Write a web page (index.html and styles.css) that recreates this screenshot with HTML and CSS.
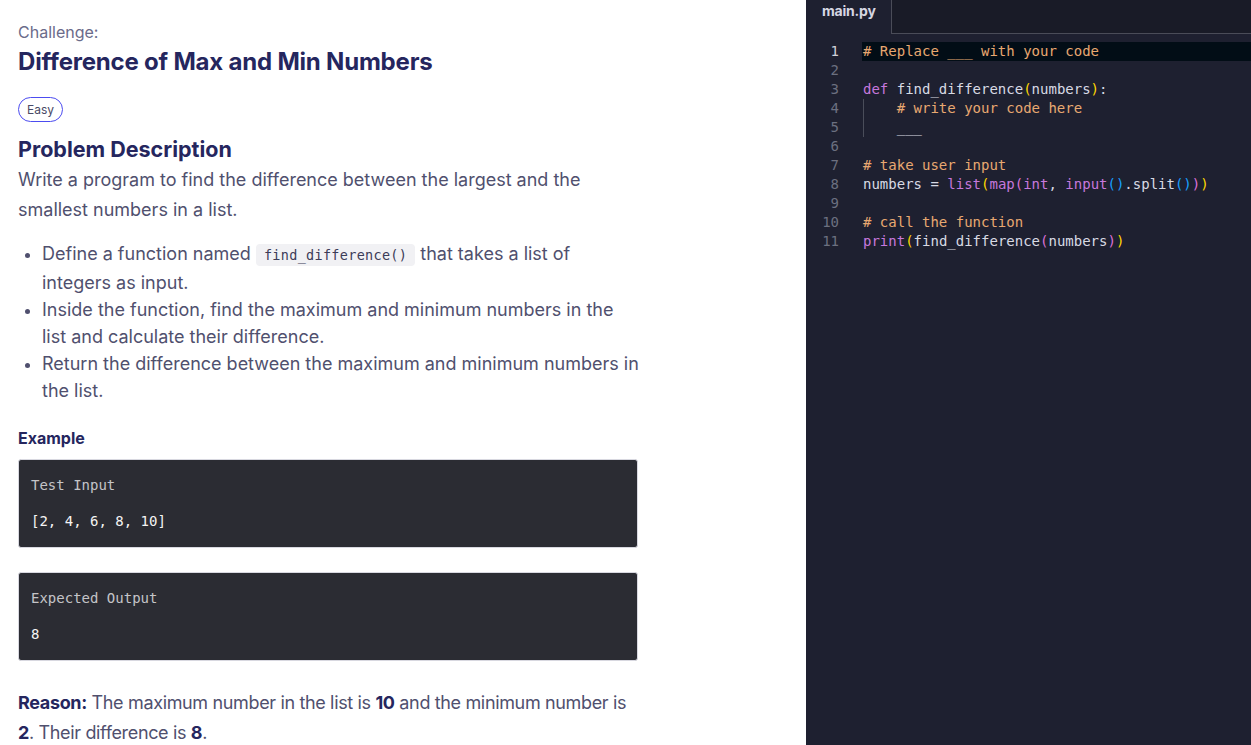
FILE: index.html
```html
<!DOCTYPE html>
<html>
<head>
<meta charset="utf-8">
<link rel="stylesheet" href="styles.css">
</head>
<body>
<div class="page">
  <main class="problem">
    <div class="content">
      <p class="eyebrow">Challenge:</p>
      <h1 class="title">Difference of Max and Min Numbers</h1>
      <span class="badge">Easy</span>
      <h2 class="section-title">Problem Description</h2>
      <p class="lead">Write a program to find the difference between the largest and the smallest numbers in a list.</p>
      <ul class="points">
        <li>Define a function named <code class="inline-code">find_difference()</code> that takes a list of integers as input.</li>
        <li>Inside the function, find the maximum and minimum numbers in the list and calculate their difference.</li>
        <li>Return the difference between the maximum and minimum numbers in the list.</li>
      </ul>
      <h3 class="example-title">Example</h3>
      <div class="io-box">
        <div class="io-label">Test Input</div>
        <div class="io-value">[2, 4, 6, 8, 10]</div>
      </div>
      <div class="io-box">
        <div class="io-label">Expected Output</div>
        <div class="io-value">8</div>
      </div>
      <p class="reason"><strong>Reason:</strong> The maximum number in the list is <strong>10</strong> and the minimum number is <strong>2</strong>. Their difference is <strong>8</strong>.</p>
    </div>
  </main>
  <section class="editor">
    <div class="tabs">
      <div class="tab">main.py</div>
      <div class="tab-fill"></div>
    </div>
    <div class="code">
      <div class="line current"><span class="ln">1</span><span class="src"><span class="c"># Replace ___ with your code</span></span></div>
      <div class="line"><span class="ln">2</span><span class="src"></span></div>
      <div class="line"><span class="ln">3</span><span class="src"><span class="k">def</span> find_difference<span class="b1">(</span>numbers<span class="b1">)</span>:</span></div>
      <div class="line"><span class="ln">4</span><span class="src guide"><span class="c">    # write your code here</span></span></div>
      <div class="line"><span class="ln">5</span><span class="src guide">    ___</span></div>
      <div class="line"><span class="ln">6</span><span class="src"></span></div>
      <div class="line"><span class="ln">7</span><span class="src"><span class="c"># take user input</span></span></div>
      <div class="line"><span class="ln">8</span><span class="src">numbers = <span class="k">list</span><span class="b1">(</span><span class="k">map</span><span class="b2">(</span><span class="k">int</span>, <span class="k">input</span><span class="b3">()</span>.split<span class="b3">()</span><span class="b2">)</span><span class="b1">)</span></span></div>
      <div class="line"><span class="ln">9</span><span class="src"></span></div>
      <div class="line"><span class="ln">10</span><span class="src"><span class="c"># call the function</span></span></div>
      <div class="line"><span class="ln">11</span><span class="src"><span class="k">print</span><span class="b1">(</span>find_difference<span class="b2">(</span>numbers<span class="b2">)</span><span class="b1">)</span></span></div>
    </div>
  </section>
</div>
</body>
</html>
```

FILE: styles.css
```css
* { box-sizing: border-box; }
html, body { margin: 0; padding: 0; height: 100%; }
body { background: #fff; font-family: Inter, "Noto Sans", sans-serif; overflow: hidden; }

.page { display: flex; height: 745px; }

.problem { width: 806px; flex: none; padding: 22px 0 0 18px; }
.content { width: 622px; }

.eyebrow { margin: 0; font-size: 16px; line-height: 20px; color: #6b6b8a; }
.title { margin: 5px 0 0; font-size: 24px; line-height: 30px; font-weight: 700; color: #25265e; letter-spacing: -0.2px; }
.badge {
  display: block; width: fit-content; margin-top: 20px;
  height: 25px; line-height: 23px; padding: 0 8px;
  border: 1px solid #4c4cf0; border-radius: 13px;
  font-size: 12px; color: #4a4a66;
}
.section-title { margin: 14px 0 0; font-size: 21.5px; line-height: 26px; font-weight: 700; color: #25265e; }
.lead { margin: 3px 0 0; font-size: 18px; line-height: 30px; color: #50506e; font-weight: 400; }

.points { margin: 15px 0 0; padding-left: 24px; list-style: none; font-size: 18px; line-height: 27px; color: #50506e; }
.points li::before {
  content: ""; display: inline-block; width: 5px; height: 5px; border-radius: 50%;
  background: #50506e; margin-left: -17px; margin-right: 12px; vertical-align: middle;
}
.inline-code {
  font-family: "DejaVu Sans Mono", monospace; font-size: 13.5px; letter-spacing: 0.3px;
  background: #f1f1f4; border-radius: 4px; padding: 3px 8px; color: #3c3c58;
}

.example-title { margin: 23px 0 0; font-size: 16px; line-height: 22px; font-weight: 700; color: #25265e; }

.io-box {
  margin-top: 10px; height: 89px; width: 620px; background: #2b2c33; border-radius: 3px;
  border: 1px solid #d8d8e0;
  padding: 16px 12px 0;
  font-family: "DejaVu Sans Mono", monospace; font-size: 14px; line-height: 18px;
}
.io-box + .io-box { margin-top: 24px; }
.io-label { color: #c4c4c8; }
.io-value { margin-top: 18px; color: #f4f4f4; }

.reason { margin: 27px 0 0; font-size: 18px; line-height: 30px; color: #50506e; letter-spacing: -0.35px; }
.reason strong { color: #25265e; }

.editor { flex: 1; background: #1e2030; display: flex; flex-direction: column; }
.tabs { display: flex; height: 34px; }
.tab {
  width: 85px; padding: 2px 0 0 16px;
  font-size: 14px; font-weight: 700; color: #d6d6e2; letter-spacing: -0.2px;
}
.tab-fill { flex: 1; background: #191b27; border-left: 1px solid #4a4c58; border-bottom: 1px solid #4a4c58; }

.code { padding-top: 8px; font-family: "DejaVu Sans Mono", monospace; font-size: 14px; line-height: 19px; }
.line { display: flex; height: 19px; white-space: pre; }
.ln { width: 33px; text-align: right; color: #6c7080; flex: none; }
.current .ln { color: #d0d0d8; }
.src { margin-left: 23px; flex: 1; color: #d8dae4; padding-left: 1px; }
.current .src { background: #020d16; }
.guide { background: linear-gradient(#4a4d5a, #4a4d5a) no-repeat 1px 0 / 1px 100%; }
.c { color: #e8a871; }
.k { color: #c678dd; }
.b1 { color: #ffd700; }
.b2 { color: #da70d6; }
.b3 { color: #179fff; }
```
